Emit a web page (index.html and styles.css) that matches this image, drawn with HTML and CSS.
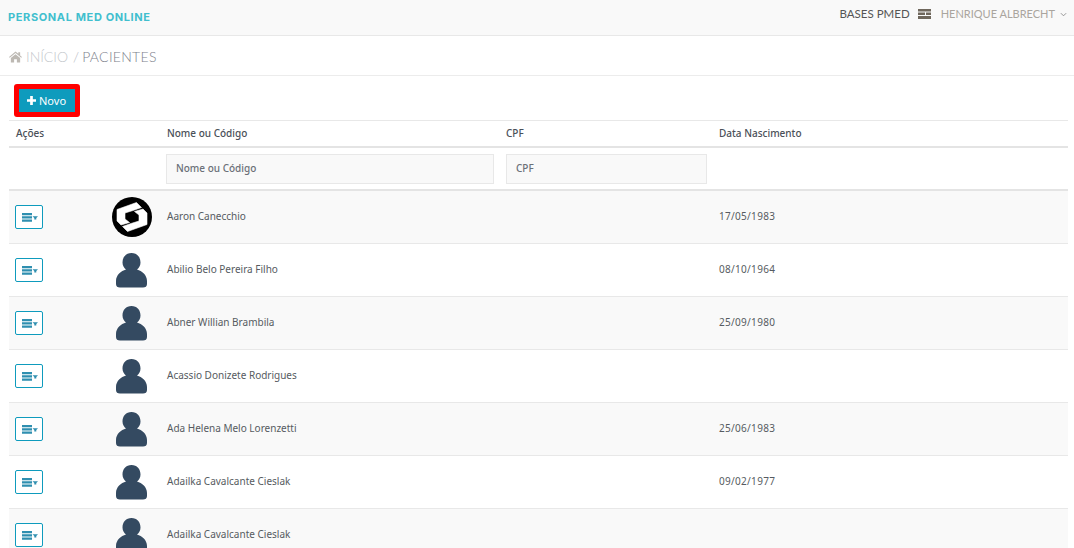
FILE: index.html
```html
<!DOCTYPE html>
<html lang="pt">
<head>
<meta charset="utf-8">
<title>Pacientes</title>
<link rel="stylesheet" href="styles.css">
</head>
<body>
<svg class="defs" width="0" height="0" aria-hidden="true">
  <symbol id="menu" viewBox="0 0 16 9">
    <path d="M0 0h10v2.200H0zM0 3.300h10v2.200H0zM0 6.600h10v2.200H0z"/>
    <path d="M10.500 3.200H16l-1.700 1.900v1.300h-2V5.100z"/>
  </symbol>
  <symbol id="person" viewBox="0 0 31 35">
    <path d="M15.500 0C21 0 24.500 4 24.500 9.500c0 3-1.500 5.500-3.500 7 5 1.500 10 5.500 10 11.500v3c0 2.500-1.500 3.500-4 3.500H4c-2.500 0-4-1-4-3.500v-3c0-6 5-10 10-11.500-2-1.500-3.500-4-3.500-7C6.500 4 10 0 15.500 0z"/>
  </symbol>
</svg>
<header class="topbar">
  <span class="brand">PERSONAL MED ONLINE</span>
  <div class="account">
    <span class="bases">BASES PMED</span>
    <svg class="server" viewBox="0 0 13 10"><path d="M0 0h13v2.500H0zM0 3.500h7v2.500H0zM8 3.500h5v2.500H8zM0 7h13v3H0z"/></svg>
    <span class="user">HENRIQUE ALBRECHT</span>
    <svg class="chev" viewBox="0 0 8 5"><path d="M1 1l3 3 3-3" fill="none" stroke="currentColor" stroke-width="1"/></svg>
  </div>
</header>
<nav class="crumbs">
  <svg class="home" viewBox="0 0 14 12"><path d="M7 0l3 2.600V1h2v3.300L14 6l-.8.900L7 1.600.8 6.900 0 6zM2 7.200L7 3l5 4.200V12H8.500V8.500h-3V12H2z"/></svg>
  <span class="crumb-link">INÍCIO</span>
  <span class="crumb-sep">/</span>
  <span class="crumb-now">PACIENTES</span>
</nav>
<main class="content">
  <div class="toolbar">
    <button class="new-btn" type="button"><svg class="plus" viewBox="0 0 10 10"><path d="M3.500 0h3v3.500H10v3H6.500V10h-3V6.500H0v-3h3.500z"/></svg>Novo</button>
  </div>
  <div class="row head">
    <div class="c-actions">Ações</div><div class="c-photo"></div><div class="c-name">Nome ou Código</div><div class="c-cpf">CPF</div><div class="c-date">Data Nascimento</div>
  </div>
  <div class="row filters">
    <div class="c-actions"></div><div class="c-photo"></div>
    <div class="c-name"><input class="field" placeholder="Nome ou Código"></div>
    <div class="c-cpf"><input class="field" placeholder="CPF"></div>
    <div class="c-date"></div>
  </div>
  <div class="row item">
    <div class="c-actions"><button class="menu-btn" type="button"><svg class="menu-ico"><use href="#menu"/></svg></button></div>
    <div class="c-photo"><svg class="logo" viewBox="0 0 40 40"><circle cx="20" cy="20" r="20" fill="#000"/><path class="logo-mark" d="M5 12.500 24.500 5.500l5 5-8.500 3-8 2.500v6l4.500 3.500L9 28l-4-4zM35 27.500 15.500 34.500l-5-5 8.500-3 8-2.500v-6l-4.500-3.500L31 12l4 4z"/></svg></div>
    <div class="c-name">Aaron Canecchio</div><div class="c-cpf"></div><div class="c-date">17/05/1983</div>
  </div>
  <div class="row item">
    <div class="c-actions"><button class="menu-btn" type="button"><svg class="menu-ico"><use href="#menu"/></svg></button></div>
    <div class="c-photo"><svg class="avatar"><use href="#person"/></svg></div>
    <div class="c-name">Abilio Belo Pereira Filho</div><div class="c-cpf"></div><div class="c-date">08/10/1964</div>
  </div>
  <div class="row item">
    <div class="c-actions"><button class="menu-btn" type="button"><svg class="menu-ico"><use href="#menu"/></svg></button></div>
    <div class="c-photo"><svg class="avatar"><use href="#person"/></svg></div>
    <div class="c-name">Abner Willian Brambila</div><div class="c-cpf"></div><div class="c-date">25/09/1980</div>
  </div>
  <div class="row item">
    <div class="c-actions"><button class="menu-btn" type="button"><svg class="menu-ico"><use href="#menu"/></svg></button></div>
    <div class="c-photo"><svg class="avatar"><use href="#person"/></svg></div>
    <div class="c-name">Acassio Donizete Rodrigues</div><div class="c-cpf"></div><div class="c-date"></div>
  </div>
  <div class="row item">
    <div class="c-actions"><button class="menu-btn" type="button"><svg class="menu-ico"><use href="#menu"/></svg></button></div>
    <div class="c-photo"><svg class="avatar"><use href="#person"/></svg></div>
    <div class="c-name">Ada Helena Melo Lorenzetti</div><div class="c-cpf"></div><div class="c-date">25/06/1983</div>
  </div>
  <div class="row item">
    <div class="c-actions"><button class="menu-btn" type="button"><svg class="menu-ico"><use href="#menu"/></svg></button></div>
    <div class="c-photo"><svg class="avatar"><use href="#person"/></svg></div>
    <div class="c-name">Adailka Cavalcante Cieslak</div><div class="c-cpf"></div><div class="c-date">09/02/1977</div>
  </div>
  <div class="row item">
    <div class="c-actions"><button class="menu-btn" type="button"><svg class="menu-ico"><use href="#menu"/></svg></button></div>
    <div class="c-photo"><svg class="avatar"><use href="#person"/></svg></div>
    <div class="c-name">Adailka Cavalcante Cieslak</div><div class="c-cpf"></div><div class="c-date"></div>
  </div>
</main>
</body>
</html>
```
FILE: styles.css
```css
* { box-sizing: border-box; }
html, body { height: 548px; overflow: hidden; }
body {
  margin: 0;
  background: #fff;
  color: #555;
  font-family: "Noto Sans", "Open Sans", sans-serif;
  font-size: 10px;
}
.defs { position: absolute; }
.topbar {
  height: 36px;
  background: #f9f9f9;
  border-bottom: 1px solid #e8e8e8;
  display: flex;
  justify-content: space-between;
  padding: 0 7px 0 8px;
}
.brand {
  margin-top: 10px;
  font: 700 11px/15px Inter, sans-serif;
  letter-spacing: .62px;
  color: #41bfce;
}
.account {
  display: flex;
  align-items: center;
  height: 28px;
  font: 400 11px/14px Lato, sans-serif;
}
.bases { color: #555; font-size: 11.5px; }
.server { width: 13px; height: 10px; margin: 0 10px 0 8px; fill: #6f675c; }
.user { color: #aaa59e; }
.chev { width: 7px; height: 5px; margin-left: 5px; color: #888; }
.crumbs {
  height: 40px;
  border-bottom: 1px solid #ececec;
  display: flex;
  align-items: center;
  padding: 2px 0 0 9px;
  font: 300 14px/18px Lato, sans-serif;
}
.home { width: 13px; height: 12px; fill: #bdb9b3; margin-right: 4px; }
.crumb-link { color: #c4c8cc; }
.crumb-sep { color: #b5b8c0; margin: 0 3px 0 5px; }
.crumb-now { color: #7d818c; letter-spacing: .3px; }
.content { padding: 0 6px 0 9px; }
.toolbar {
  height: 45px;
  border-bottom: 1px solid #e8e8e8;
  padding: 8px 0 0 5px;
}
.new-btn {
  display: flex;
  align-items: center;
  width: 66px;
  height: 33px;
  padding: 0 0 0 9px;
  background: #0e9bbd;
  border: 5px solid #f00;
  border-radius: 3px;
  color: #fff;
  font: 400 11px/14px "Noto Sans", sans-serif;
}
.plus { width: 9px; height: 9px; fill: #fff; margin: 0 3px 0 -1px; }
.row {
  display: grid;
  grid-template-columns: 97px 60px 340px 213px 1fr;
}
.row > div { display: flex; align-items: center; }
.c-actions { padding-left: 6px; }
.head {
  height: 27px;
  padding-bottom: 2px;
  border-bottom: 2px solid #e4e4e4;
  font-weight: 500;
  color: #4a5058;
}
.head .c-actions { padding-left: 7px; }
.head .c-name, .item .c-name { padding-left: 1px; }
.filters {
  height: 43px;
  border-bottom: 2px solid #e4e4e4;
}
.filters .c-name, .filters .c-cpf { padding-right: 12px; }
.field {
  width: 100%;
  height: 30px;
  padding: 0 9px 2px;
  background: #f9f9f9;
  border: 1px solid #e8e8e8;
  font: 500 10px "Noto Sans", sans-serif;
  color: #555;
}
.field::placeholder { color: #6b7078; opacity: 1; }
.item {
  height: 53px;
  border-bottom: 1px solid #e8e8e8;
  color: #565b61;
}
.item:nth-child(even) { background: #f9f9f9; }
.item .c-name, .item .c-date { padding-bottom: 2px; }
.item .c-date { letter-spacing: .3px; }
.menu-btn {
  width: 28px;
  height: 24px;
  padding: 0 0 0 2px;
  display: flex;
  align-items: center;
  justify-content: center;
  background: #fff;
  border: 1px solid #0e9bbd;
  border-radius: 2px;
}
.menu-ico { width: 16px; height: 9px; fill: #2f8fb0; }
.logo { width: 40px; height: 40px; margin-left: 6px; }
.logo-mark { fill: #fff; stroke: #fff; stroke-width: .6; stroke-linejoin: round; }
.avatar { width: 31px; height: 35px; margin-left: 10px; fill: #344a61; }
```
